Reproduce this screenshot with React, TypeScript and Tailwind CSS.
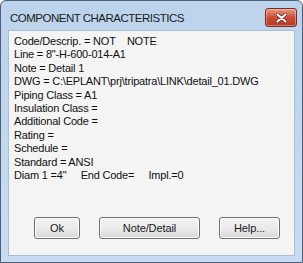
import React from 'react';

const lines = [
  'Code/Descrip. = NOT    NOTE',
  'Line = 8"-H-600-014-A1',
  'Note = Detail 1',
  'DWG = C:\\EPLANT\\prj\\tripatra\\LINK\\detail_01.DWG',
  'Piping Class = A1',
  'Insulation Class =',
  'Additional Code =',
  'Rating =',
  'Schedule =',
  'Standard = ANSI',
  'Diam 1 =4"     End Code=     Impl.=0',
];

function Btn({ label, w }: { label: string; w: string }) {
  return (
    <button
      className={`${w} h-[22px] rounded-[3px] border border-[#707070] bg-gradient-to-b from-[#f3f3f3] via-[#ebebeb] to-[#dadada] text-[11px] tracking-[-0.1px] text-[#1a1a1a] shadow-[inset_0_0_0_1px_#fcfcfc]`}
    >
      {label}
    </button>
  );
}

export default function App() {
  return (
    <div
      className="w-[303px] h-[263px] flex flex-col rounded-t-[6px] border border-[#4d6079] bg-gradient-to-b from-[#bcd3ec] to-[#c9dcf1] px-[7px] pb-[6px]"
      style={{ fontFamily: '"Liberation Sans", Arial, sans-serif' }}
    >
      <div className="h-[29px] flex items-start justify-between">
        <span className="mt-[10px] ml-[2px] text-[11.5px] leading-[15px] text-[#1b1b1b] tracking-[-0.5px]">
          COMPONENT CHARACTERISTICS
        </span>
        <div className="mt-[7px] mr-[-2px] w-[32px] h-[19px] flex items-center justify-center rounded-[3px] border border-[#7b2a1e] bg-gradient-to-b from-[#e39a85] via-[#cc4b32] to-[#b83a22] shadow-[inset_0_0_0_1px_rgba(255,255,255,0.35)]">
          <svg width="11" height="10" viewBox="0 0 11 10">
            <path d="M1.5 1.5 L9.5 8.5 M9.5 1.5 L1.5 8.5" stroke="#5a1a10" strokeWidth="3.4" strokeLinecap="round" />
            <path d="M1.5 1.5 L9.5 8.5 M9.5 1.5 L1.5 8.5" stroke="#ffffff" strokeWidth="2.2" strokeLinecap="round" />
          </svg>
        </div>
      </div>
      <div className="flex-1 flex flex-col border border-[#a9bfd6] bg-[#f4f4f4]">
        <div className="pl-[5px] pt-[4px] text-[11px] leading-[13.4px] tracking-[-0.2px] text-[#111] whitespace-pre">
          {lines.map((l, i) => (
            <div key={i}>{l}</div>
          ))}
        </div>
        <div className="flex-1" />
        <div className="flex pl-[25px] gap-[19px] pb-[16px]">
          <Btn label="Ok" w="w-[46px]" />
          <Btn label="Note/Detail" w="w-[101px]" />
          <Btn label="Help..." w="w-[61px]" />
        </div>
      </div>
    </div>
  );
}
